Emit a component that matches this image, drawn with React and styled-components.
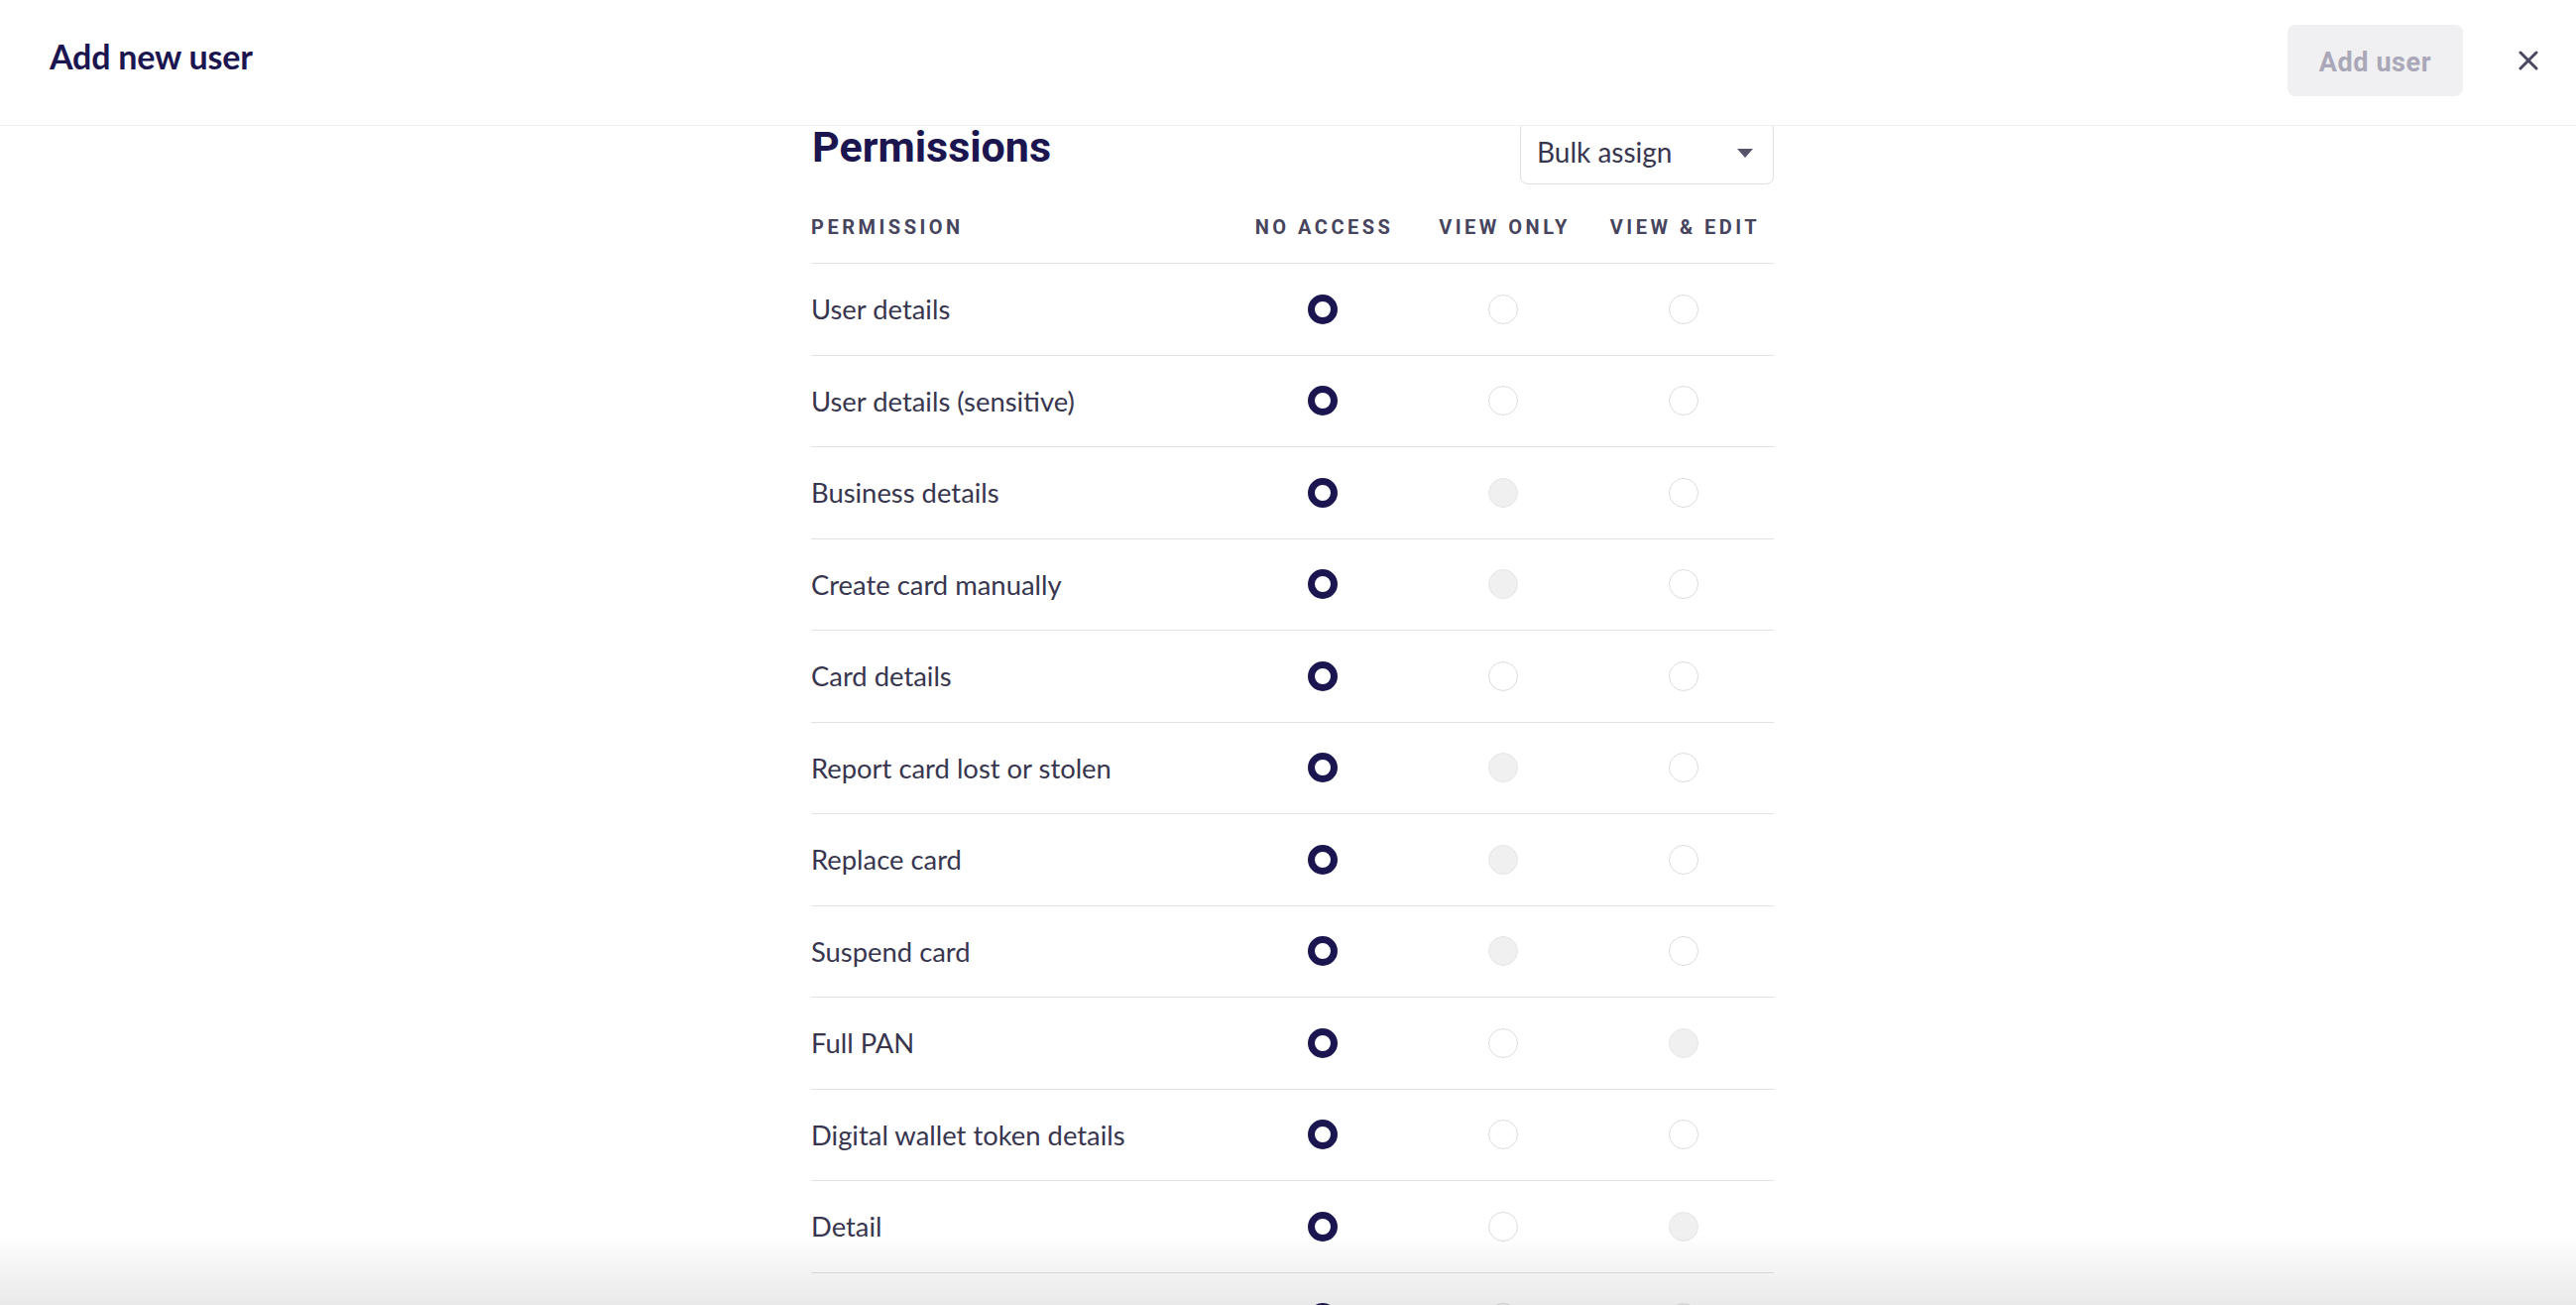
import React from 'react';
import styled, { createGlobalStyle } from 'styled-components';

const GlobalStyle = createGlobalStyle`
  html, body {
    margin: 0;
    padding: 0;
    background: #fff;
    height: 100%;
  }
  #root {
    height: 100%;
  }
`;

const NAVY = '#1b1650';
const INK = '#38364f';
const LINE = '#e2e1e6';

const Page = styled.div`
  height: 100vh;
  display: flex;
  flex-direction: column;
  overflow: hidden;
  font-family: Lato, 'Open Sans', sans-serif;
`;

// header sits above the scrolled form so the select's top edge slides under it
const Header = styled.header`
  flex: none;
  position: relative;
  z-index: 1;
  height: 126px;
  display: flex;
  align-items: center;
  padding: 0 38px 0 50px;
  background: #fff;
  border-bottom: 1.66px solid #efeff1;
`;

const Title = styled.h1`
  margin: 0 0 14px;
  flex: 1;
  font-size: 34px;
  font-weight: 700;
  color: ${NAVY};
  letter-spacing: -0.2px;
`;

const AddButton = styled.button`
  height: 72px;
  width: 177px;
  margin-top: -4px;
  border: none;
  border-radius: 8px;
  background: #f0f0f2;
  color: #aaa8b8;
  font-family: Roboto, sans-serif;
  font-weight: 700;
  font-size: 27px;
  letter-spacing: 0.6px;
  padding-top: 4px;
  cursor: not-allowed;
`;

const CloseButton = styled.button`
  margin-left: 56px;
  margin-top: -4px;
  width: 20px;
  height: 20px;
  padding: 0;
  border: none;
  background: none;
  display: flex;
  align-items: center;
  justify-content: center;
  cursor: pointer;
`;

const Body = styled.main`
  flex: 1;
  position: relative;
  padding-left: 9px;
`;

const Content = styled.section`
  width: 971px;
  margin: -4px auto 0;
`;

const TopRow = styled.div`
  display: flex;
  justify-content: space-between;
  align-items: flex-start;
`;

const Heading = styled.h2`
  margin: 0 0 0 1px;
  font-family: Roboto, sans-serif;
  font-size: 43px;
  line-height: 50px;
  font-weight: 700;
  color: ${NAVY};
`;

const Select = styled.div`
  box-sizing: border-box;
  width: 256px;
  height: 63px;
  border: 1.66px solid #e0dfe4;
  border-radius: 8px;
  display: flex;
  align-items: center;
  justify-content: space-between;
  padding: 0 20px 4px 16px;
  font-size: 28px;
  color: ${INK};
`;

const Caret = styled.span`
  width: 0;
  height: 0;
  margin-top: 4px;
  border-left: 8px solid transparent;
  border-right: 8px solid transparent;
  border-top: 9px solid #56546b;
`;

const Grid = styled.div`
  display: grid;
  grid-template-columns: 1fr 182px 182px 182px;
  align-items: center;
  box-sizing: border-box;
  border-bottom: 1.66px solid ${LINE};
`;

const HeadRow = styled(Grid)`
  padding: 31px 0 24px;
`;

const Row = styled(Grid)`
  height: 92.5px;
`;

const HeadCell = styled.div`
  font-family: Roboto, sans-serif;
  font-size: 20px;
  line-height: 24px;
  font-weight: 700;
  letter-spacing: 3.5px;
  color: #47455d;
  text-align: ${p => (p.$first ? 'left' : 'center')};
  padding-left: ${p => (p.$first ? '0' : '3px')};
`;

const Label = styled.div`
  font-size: 27.4px;
  color: ${INK};
`;

const Cell = styled.div`
  display: flex;
  justify-content: center;
`;

const Radio = styled.span`
  box-sizing: border-box;
  width: 30px;
  height: 30px;
  border-radius: 50%;
  background: ${p => (p.$state === 'off' ? '#f0f0f1' : '#fff')};
  border: ${p =>
    p.$state === 'on'
      ? `7.5px solid ${NAVY}`
      : p.$state === 'off'
      ? '1px solid #e6e6e8'
      : '1px solid #dcdce0'};
`;

const Fade = styled.div`
  position: fixed;
  left: 0;
  right: 0;
  bottom: 0;
  height: 72px;
  pointer-events: none;
  background: linear-gradient(rgba(0, 0, 0, 0), rgba(0, 0, 0, 0.085));
`;

const permissions = [
  ['User details', 'empty', 'empty'],
  ['User details (sensitive)', 'empty', 'empty'],
  ['Business details', 'off', 'empty'],
  ['Create card manually', 'off', 'empty'],
  ['Card details', 'empty', 'empty'],
  ['Report card lost or stolen', 'off', 'empty'],
  ['Replace card', 'off', 'empty'],
  ['Suspend card', 'off', 'empty'],
  ['Full PAN', 'empty', 'off'],
  ['Digital wallet token details', 'empty', 'empty'],
  ['Detail', 'empty', 'off'],
  ['', 'empty', 'off'],
];

const CloseIcon = () => (
  <svg width="20" height="20" viewBox="0 0 20 20">
    <path d="M2 2 L18 18 M18 2 L2 18" stroke="#4a4860" strokeWidth="3" strokeLinecap="round" />
  </svg>
);

export default function App() {
  return (
    <Page>
      <GlobalStyle />
      <Header>
        <Title>Add new user</Title>
        <AddButton disabled>Add user</AddButton>
        <CloseButton aria-label="Close">
          <CloseIcon />
        </CloseButton>
      </Header>
      <Body>
        <Content>
          <TopRow>
            <Heading>Permissions</Heading>
            <Select>
              <span>Bulk assign</span>
              <Caret />
            </Select>
          </TopRow>
          <HeadRow>
            <HeadCell $first>PERMISSION</HeadCell>
            <HeadCell>NO ACCESS</HeadCell>
            <HeadCell>VIEW ONLY</HeadCell>
            <HeadCell>VIEW &amp; EDIT</HeadCell>
          </HeadRow>
          {permissions.map(([name, view, edit], i) => (
            <Row key={i}>
              <Label>{name}</Label>
              <Cell>
                <Radio $state="on" />
              </Cell>
              <Cell>
                <Radio $state={view} />
              </Cell>
              <Cell>
                <Radio $state={edit} />
              </Cell>
            </Row>
          ))}
        </Content>
        <Fade />
      </Body>
    </Page>
  );
}
